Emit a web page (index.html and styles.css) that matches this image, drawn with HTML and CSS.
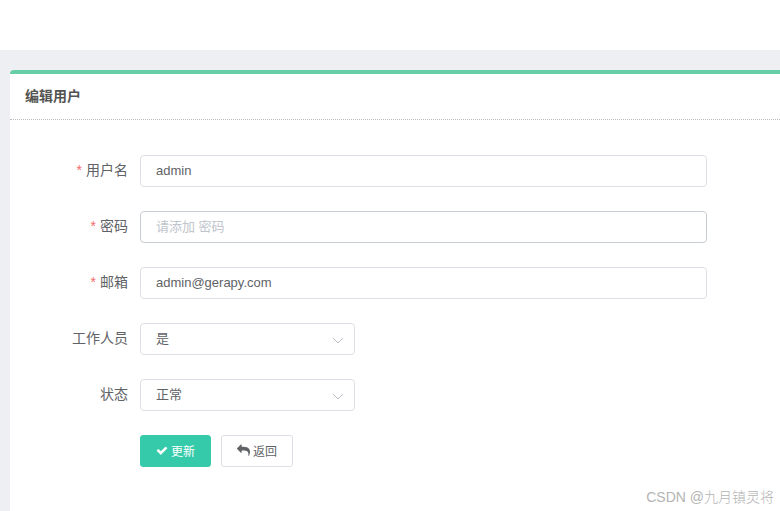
FILE: index.html
```
<!DOCTYPE html>
<html lang="zh-CN">
<head>
    <meta charset="UTF-8">
    <meta name="viewport" content="width=device-width, initial-scale=1.0">
    <title>编辑用户</title>
    <link rel="stylesheet" href="styles.css">
</head>
<body>
    <header class="navbar"></header>
    <main class="content">
        <section class="panel">
            <h1 class="panel-title">编辑用户</h1>
            <form class="user-form" action="#" method="post">
                <div class="form-item required">
                    <label for="username">用户名</label>
                    <input type="text" id="username" name="username" value="admin">
                </div>
                <div class="form-item required">
                    <label for="password">密码</label>
                    <input type="password" id="password" class="hover" name="password" placeholder="请添加 密码">
                </div>
                <div class="form-item required">
                    <label for="email">邮箱</label>
                    <input type="text" id="email" name="email" value="admin@gerapy.com">
                </div>
                <div class="form-item">
                    <label for="is_staff">工作人员</label>
                    <div class="select">
                        <select id="is_staff" name="is_staff">
                            <option selected>是</option>
                            <option>否</option>
                        </select>
                        <svg class="arrow" viewBox="0 0 12 12"><path d="M1 3l5 5 5-5"/></svg>
                    </div>
                </div>
                <div class="form-item">
                    <label for="is_active">状态</label>
                    <div class="select">
                        <select id="is_active" name="is_active">
                            <option selected>正常</option>
                            <option>禁用</option>
                        </select>
                        <svg class="arrow" viewBox="0 0 12 12"><path d="M1 3l5 5 5-5"/></svg>
                    </div>
                </div>
                <div class="buttons">
                    <button type="submit" class="btn btn-success">
                        <svg class="icon" viewBox="0 0 1792 1792"><path d="M1671 566q0 40-28 68l-724 724-136 136q-28 28-68 28t-68-28l-136-136-362-362q-28-28-28-68t28-68l136-136q28-28 68-28t68 28l294 295 656-657q28-28 68-28t68 28l136 136q28 28 28 68z"/></svg>
                        更新
                    </button>
                    <button type="button" class="btn">
                        <svg class="icon icon-reply" viewBox="0 0 1792 1792"><path d="M1792 1120q0 166-127 451-3 7-10.500 24t-13.500 30-13 22q-12 17-28 17-15 0-23.500-10t-8.500-25q0-9 2.500-26.500t2.500-23.500q5-68 5-123 0-101-17.500-181t-48.500-138.500-80-101-105.500-69.500-133-42.500-154-21.500-175.500-6h-224v256q0 26-19 45t-45 19-45-19l-512-512q-19-19-19-45t19-45l512-512q19-19 45-19t45 19 19 45v256h224q713 0 875 403 53 134 53 333z"/></svg>
                        返回
                    </button>
                </div>
            </form>
        </section>
    </main>
    <div class="watermark">CSDN @九月镇灵将</div>
</body>
</html>
```

FILE: styles.css
```
* {
    box-sizing: border-box;
}

body {
    display: flex;
    flex-direction: column;
    min-height: 100vh;
    margin: 0;
    background: #edeff3;
    color: #606266;
    font-family: "Liberation Sans", "Noto Sans CJK SC", sans-serif;
    font-size: 14px;
}

.navbar {
    height: 50px;
    background: #fff;
}

.content {
    display: flex;
    flex: 1;
    padding: 20px 0 0 10px;
}

/* Panel */
.panel {
    flex: 1;
    background: #fff;
    border-top: 4px solid #65cea7;
    border-radius: 4px 0 0 0;
}

.panel-title {
    margin: 0;
    padding: 12px 15px;
    border-bottom: 1px dotted #bbb;
    color: #535351;
    font-size: 14px;
    line-height: 21px;
}

/* Form */
.user-form {
    display: flex;
    flex-direction: column;
    gap: 24px;
    padding: 35px 73px 44px 10px;
}

.form-item {
    display: flex;
}

.form-item label {
    width: 120px;
    padding-right: 12px;
    line-height: 30px;
    text-align: right;
}

.required label::before {
    content: "*";
    margin-right: 4px;
    color: #f56c6c;
}

input,
select {
    height: 32px;
    padding: 0 15px 2px;
    border: 1px solid #dcdfe6;
    border-radius: 4px;
    background: #fff;
    color: #606266;
    font-family: inherit;
    font-size: 13px;
    outline: none;
}

input {
    flex: 1;
    min-width: 0;
}

input.hover,
input:hover {
    border-color: #c8ccd4;
}

input:focus {
    border-color: #35cbaa;
}

input::placeholder {
    color: #c0c4cc;
}

.select {
    position: relative;
    width: 215px;
}

select {
    width: 100%;
    padding: 0 30px 2px 15px;
    appearance: none;
}

.arrow {
    position: absolute;
    top: 12px;
    right: 11px;
    width: 12px;
    height: 12px;
    fill: none;
    stroke: #b8bcc6;
    pointer-events: none;
}

/* Buttons */
.buttons {
    display: flex;
    gap: 10px;
    padding-left: 120px;
}

.btn {
    display: flex;
    align-items: center;
    gap: 3px;
    height: 32px;
    padding: 0 15px 2px;
    border: 1px solid #dcdfe6;
    border-radius: 3px;
    background: #fff;
    color: #606266;
    font-family: inherit;
    font-size: 12px;
    cursor: pointer;
}

.btn-success {
    border-color: #35cbaa;
    background: #35cbaa;
    color: #fff;
}

.icon {
    width: 12px;
    height: 13px;
    fill: currentColor;
}

.icon-reply {
    width: 13px;
}

.watermark {
    position: absolute;
    right: 6px;
    bottom: 4px;
    color: #b4b4b4;
    font-weight: 300;
    line-height: 20px;
}
```
